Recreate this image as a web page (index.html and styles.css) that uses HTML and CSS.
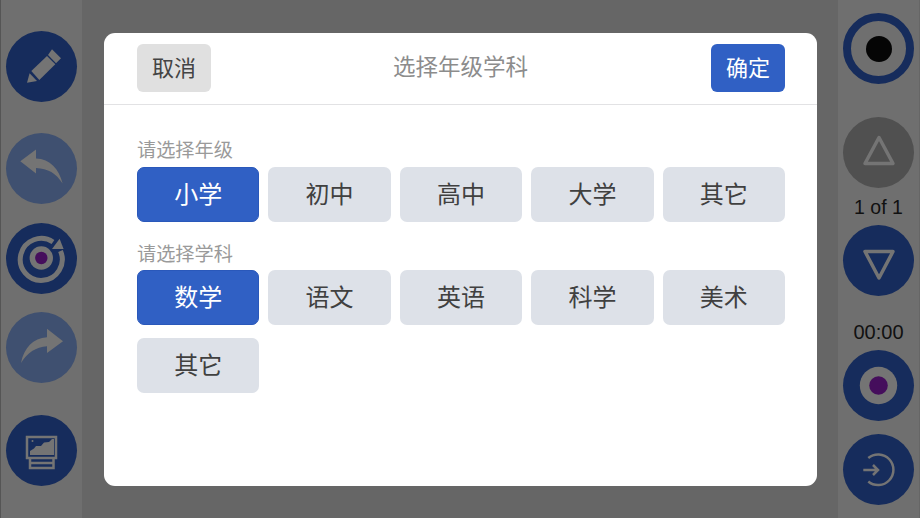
FILE: index.html
```html
<!DOCTYPE html>
<html lang="zh-CN">
<head>
    <meta charset="UTF-8">
    <meta name="viewport" content="width=device-width, initial-scale=1.0">
    <title>选择年级学科</title>
    <link rel="stylesheet" href="styles.css">
</head>
<body>
    <div class="screen">
        <div class="side side-left">
            <div class="round">
                <svg viewBox="0 0 71 71" width="71" height="71">
                    <path class="ico" d="M21 51.7 L23.6 42.3 L31 50 Z"/>
                    <path class="ico" d="M25.3 40 L41 25 L49.3 33.3 L33.3 49 Z"/>
                    <path class="ico" d="M42 24 L46 18.3 L55 27.3 L50 32.3 Z"/>
                </svg>
            </div>
            <div class="round round-faded round-undo">
                <svg viewBox="0 0 71 71" width="71" height="71">
                    <path class="ico" d="M14.3 28.3 L30 16.6 V25.6 C44 26 53 36 56.6 50.6 C50 40 42 35.6 30 35 V40.6 Z"/>
                </svg>
            </div>
            <div class="round round-target">
                <svg viewBox="0 0 71 71" width="71" height="71">
                    <path class="ring" d="M54.5 28 A21 21 0 1 1 47 19"/>
                    <path class="ico" d="M53.6 15.7 L57.6 26 H46 Z"/>
                    <circle class="dot-ring" cx="35.3" cy="35" r="11.7"/>
                    <circle class="dot-purple" cx="35.3" cy="35" r="6.2"/>
                </svg>
            </div>
            <div class="round round-faded round-redo">
                <svg viewBox="0 0 71 71" width="71" height="71">
                    <path class="ico" d="M57 29.3 L41 16.7 V25.3 C27 26 18 36 15 51 C21 41 30 35 41 34.3 V41 Z"/>
                </svg>
            </div>
            <div class="round round-gallery">
                <svg viewBox="0 0 71 71" width="71" height="71">
                    <path class="line" d="M21 22 H50 V43 H21 Z"/>
                    <path class="ico" d="M24 40 V36 L28 33.5 L30 31 L35 31 L38 27.5 L43 27 L46 24 H48 V40 Z"/>
                    <circle class="ico" cx="26.5" cy="26" r="1"/>
                    <path class="line" d="M24 43 V53 H47.5 V43 M24 48 H47.5"/>
                </svg>
            </div>
        </div>

        <div class="main">
            <div class="dialog">
                <div class="dialog-head">
                    <button type="button" class="head-btn head-cancel">取消</button>
                    <span class="dialog-title">选择年级学科</span>
                    <button type="button" class="head-btn head-ok">确定</button>
                </div>
                <div class="dialog-body">
                    <p class="group-label">请选择年级</p>
                    <div class="options">
                        <button type="button" class="opt opt-on">小学</button>
                        <button type="button" class="opt">初中</button>
                        <button type="button" class="opt">高中</button>
                        <button type="button" class="opt">大学</button>
                        <button type="button" class="opt">其它</button>
                    </div>
                    <p class="group-label group-label-2">请选择学科</p>
                    <div class="options">
                        <button type="button" class="opt opt-on">数学</button>
                        <button type="button" class="opt">语文</button>
                        <button type="button" class="opt">英语</button>
                        <button type="button" class="opt">科学</button>
                        <button type="button" class="opt">美术</button>
                        <button type="button" class="opt">其它</button>
                    </div>
                </div>
            </div>
        </div>

        <div class="side side-right">
            <div class="round round-record">
                <div class="record-dot"></div>
            </div>
            <div class="round round-dark">
                <svg viewBox="0 0 71 71" width="71" height="71">
                    <path class="tri" d="M36 20.5 L50 46.5 H22 Z"/>
                </svg>
            </div>
            <div class="side-text page-count">1 of 1</div>
            <div class="round">
                <svg viewBox="0 0 71 71" width="71" height="71">
                    <path class="tri" d="M22 26.5 H50 L36 53 Z"/>
                </svg>
            </div>
            <div class="side-text timer">00:00</div>
            <div class="round">
                <svg viewBox="0 0 71 71" width="71" height="71">
                    <circle class="dot-ring" cx="35.5" cy="35.5" r="18.7"/>
                    <circle class="dot-purple" cx="35.5" cy="35.5" r="9.3"/>
                </svg>
            </div>
            <div class="round round-exit">
                <svg viewBox="0 0 71 71" width="71" height="71">
                    <path class="line-thick" d="M25.3 24 A15.3 15.3 0 1 1 25.3 47.5"/>
                    <path class="line-thick" d="M20.3 36 H35 M30 31 L35 36 L30 41"/>
                </svg>
            </div>
        </div>
    </div>
</body>
</html>
```
FILE: styles.css
```css
* {
    box-sizing: border-box;
}
html, body {
    margin: 0;
    padding: 0;
    height: 518px;
    overflow: hidden;
}
body {
    font-family: "Liberation Sans", "Noto Sans CJK SC", sans-serif;
    background-color: #666666;
}
.screen {
    display: flex;
    width: 920px;
    height: 518px;
}
.side {
    width: 82px;
    flex-shrink: 0;
    display: flex;
    flex-direction: column;
    align-items: center;
    background-color: #6f6f6f;
}
.side-left {
    padding-top: 31px;
    border-left: 1px solid #555555;
}
.side-right {
    padding-top: 13px;
    border-right: 1px solid #666666;
}
.round {
    width: 71px;
    height: 71px;
    border-radius: 50%;
    flex-shrink: 0;
    background-color: #162c5c;
}
.round svg {
    display: block;
}
.round-undo {
    margin-top: 31px;
}
.round-target {
    margin-top: 19px;
}
.round-redo {
    margin-top: 18px;
}
.round-gallery {
    margin-top: 32px;
}
.round-faded {
    background-color: #3f5070;
}
.round-dark {
    margin-top: 33px;
    background-color: #505050;
}
.round-record {
    background-color: #6f6f6f;
    border: 8px solid #162c5c;
    display: flex;
    align-items: center;
    justify-content: center;
}
.record-dot {
    width: 26px;
    height: 26px;
    border-radius: 50%;
    background-color: #050505;
}
.round-exit {
    margin-top: 13px;
}
.ico {
    fill: #747474;
}
.ring {
    fill: none;
    stroke: #747474;
    stroke-width: 5;
}
.line {
    fill: none;
    stroke: #747474;
    stroke-width: 2.5;
}
.line-thick {
    fill: none;
    stroke: #747474;
    stroke-width: 2.5;
}
.tri {
    fill: none;
    stroke: #747474;
    stroke-width: 3.5;
    stroke-linejoin: round;
}
.dot-ring {
    fill: #747474;
}
.dot-purple {
    fill: #450e5c;
}
.side-text {
    height: 20px;
    line-height: 20px;
    text-align: center;
    color: #111111;
}
.page-count {
    margin-top: 9px;
    margin-bottom: 8px;
    font-size: 19.5px;
}
.timer {
    margin-top: 26px;
    margin-bottom: 8px;
    font-size: 20px;
}

.main {
    flex: 1;
    padding: 33px 0 0 22px;
}
.dialog {
    width: 713px;
    height: 453px;
    border-radius: 11px;
    background-color: #ffffff;
}
.dialog-head {
    height: 72px;
    padding: 11px 32px 0 33px;
    display: flex;
    justify-content: space-between;
    align-items: flex-start;
    border-bottom: 1px solid #e2e2e4;
}
.head-btn {
    width: 74px;
    height: 48px;
    padding: 0 0 5px;
    border: none;
    border-radius: 6px;
    font-family: inherit;
    font-size: 22px;
}
.head-cancel {
    background-color: #e0e0e0;
    color: #444444;
}
.head-ok {
    background-color: #3060c4;
    color: #ffffff;
}
.dialog-title {
    margin-left: -1px;
    font-size: 22.5px;
    line-height: 47px;
    color: #8c8c8c;
}
.dialog-body {
    padding: 33px 32px 0 33px;
}
.group-label {
    margin: 0 0 3px;
    height: 26px;
    font-size: 19.2px;
    line-height: 26px;
    color: #9a9a9a;
}
.group-label-2 {
    margin-top: 20px;
    margin-bottom: 2px;
}
.options {
    display: grid;
    grid-template-columns: repeat(5, 1fr);
    gap: 13px 9px;
}
.opt {
    height: 55px;
    padding: 0 0 4px;
    border: none;
    border-radius: 7px;
    font-family: inherit;
    font-size: 24px;
    background-color: #dde1e8;
    color: #404040;
}
.opt-on {
    border: 1px solid #2a58ba;
    background-color: #3060c4;
    color: #ffffff;
}
```
